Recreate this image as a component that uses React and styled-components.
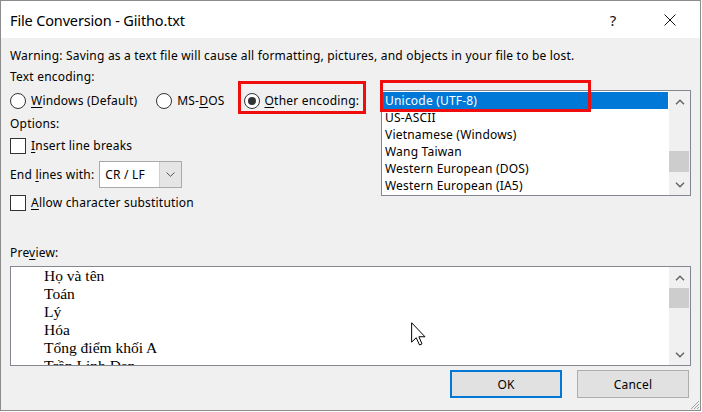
import React from "react";
import styled, { createGlobalStyle, css } from "styled-components";

const UI = `"Noto Sans", "Open Sans", "DejaVu Sans", sans-serif`;
const SERIF = `"Liberation Serif", "DejaVu Serif", serif`;

const GlobalStyle = createGlobalStyle`
  html, body { margin: 0; padding: 0; background: #ffffff; }
  body { font-family: ${UI}; }
  *, *::before, *::after { box-sizing: border-box; }
`;

const Page = styled.div`
  position: relative;
  width: 702px;
  height: 412px;
  overflow: hidden;
  background: #ffffff;
`;

const Window = styled.div`
  width: 701px;
  height: 411px;
  border: 1px solid #8c8c8c;
  display: flex;
  flex-direction: column;
  font-family: ${UI};
  color: #000;
`;

const TitleBar = styled.div`
  height: 37px;
  flex: none;
  display: flex;
  align-items: center;
  background: #ffffff;
  padding-left: 9px;
`;

const Title = styled.div`
  font-size: 14.5px;
  letter-spacing: -0.15px;
  white-space: nowrap;
`;

const TitleButtons = styled.div`
  margin-left: auto;
  display: flex;
  height: 100%;
`;

const TitleButton = styled.div`
  width: ${(p) => p.$w}px;
  height: 100%;
  display: flex;
  align-items: center;
  justify-content: center;
  font-size: 15px;
  color: #111;
`;

const Body = styled.div`
  position: relative;
  flex: 1;
  background: #f0f0f0;
  padding: 8px 9px 0;
  display: flex;
  flex-direction: column;
  font-size: 12px;
  letter-spacing: 0.2px;
`;

const Line = styled.div`
  height: ${(p) => p.$h}px;
  line-height: ${(p) => p.$h}px;
  margin-top: ${(p) => p.$mt || 0}px;
  white-space: nowrap;
`;

const Key = styled.span`
  text-decoration: underline;
  text-underline-offset: 2px;
`;

const EncodingSection = styled.div`
  display: flex;
  align-items: flex-start;
  height: 126px;
`;

const LeftColumn = styled.div`
  width: 371px;
  display: flex;
  flex-direction: column;
`;

const Row = styled.div`
  display: flex;
  align-items: center;
  height: ${(p) => p.$h}px;
  gap: ${(p) => p.$gap || 0}px;
  white-space: nowrap;
`;

const Option = styled.label`
  display: flex;
  align-items: center;
  gap: 5px;
`;

const RadioCircle = styled.span`
  width: 16px;
  height: 16px;
  flex: none;
  border: 1px solid #333;
  border-radius: 50%;
  background: #fff;
  display: flex;
  align-items: center;
  justify-content: center;
  ${(p) =>
    p.$checked &&
    css`
      &::after {
        content: "";
        width: 8px;
        height: 8px;
        border-radius: 50%;
        background: #333;
      }
    `}
`;

const CheckBox = styled.span`
  width: 16px;
  height: 16px;
  flex: none;
  border: 1px solid #333;
  background: #fff;
`;

const Combo = styled.div`
  margin-left: 5px;
  width: 83px;
  height: 27px;
  border: 1px solid #a9a9a9;
  background: #fff;
  display: flex;
`;

const ComboValue = styled.div`
  flex: 1;
  padding-left: 5px;
  display: flex;
  align-items: center;
`;

const ComboButton = styled.div`
  width: 22px;
  background: #e5e5e5;
  border-left: 1px solid #cfcfcf;
  display: flex;
  align-items: center;
  justify-content: center;
`;

const ListBox = styled.div`
  margin-top: 2px;
  width: 310px;
  height: 106px;
  border: 1px solid #828790;
  background: #fff;
  display: flex;
`;

const Items = styled.div`
  flex: 1;
  padding: 1px 1px 0 1px;
  overflow: hidden;
`;

const Item = styled.div`
  height: 17px;
  line-height: 17px;
  padding-left: 2px;
  white-space: nowrap;
  ${(p) =>
    p.$selected &&
    css`
      background: #0078d7;
      color: #fff;
    `}
`;

const ScrollBar = styled.div`
  width: 21px;
  flex: none;
  background: #f0f0f0;
  display: flex;
  flex-direction: column;
`;

const ScrollArrow = styled.div`
  height: 21px;
  flex: none;
  display: flex;
  align-items: center;
  justify-content: center;
`;

const ScrollTrack = styled.div`
  flex: 1;
  display: flex;
  flex-direction: column;
  justify-content: ${(p) => (p.$atEnd ? "flex-end" : "flex-start")};
  padding: ${(p) => (p.$atEnd ? "0 1px 2px 0" : "0 1px 0 0")};
`;

const Thumb = styled.div`
  height: ${(p) => p.$h}px;
  background: #cdcdcd;
`;

const PreviewBox = styled.div`
  margin-top: 3px;
  height: 100px;
  border: 1px solid #828790;
  background: #fff;
  display: flex;
`;

const PreviewText = styled.div`
  flex: 1;
  overflow: hidden;
  padding-left: 33px;
  font-family: ${SERIF};
  font-size: 15.5px;
  letter-spacing: 0;
  line-height: 17.9px;
  white-space: nowrap;
`;

const ButtonRow = styled.div`
  margin-top: 4px;
  display: flex;
  justify-content: flex-end;
  gap: 15px;
  padding-right: 2px;
`;

const Button = styled.div`
  width: 112px;
  height: 28px;
  background: #e1e1e1;
  border: ${(p) => (p.$primary ? "2px solid #0078d7" : "1px solid #adadad")};
  display: flex;
  align-items: center;
  justify-content: center;
`;

const Grip = styled.svg`
  position: absolute;
  right: 0;
  bottom: 0;
`;

const Highlight = styled.div`
  position: absolute;
  left: ${(p) => p.$x}px;
  top: ${(p) => p.$y}px;
  width: ${(p) => p.$w}px;
  height: ${(p) => p.$h}px;
  border: 3px solid #f00d0d;
  pointer-events: none;
`;

const Cursor = styled.svg`
  position: absolute;
  left: 411px;
  top: 322px;
`;

const Chevron = ({ dir }) => (
  <svg width="10" height="6" viewBox="0 0 10 6">
    <polyline
      points={dir === "up" ? "1,5.2 5,1.2 9,5.2" : "1,0.8 5,4.8 9,0.8"}
      fill="none"
      stroke="#606060"
      strokeWidth="1.4"
    />
  </svg>
);

const SmallChevron = () => (
  <svg width="9" height="5" viewBox="0 0 9 5">
    <polyline points="0.5,0.5 4.5,4.3 8.5,0.5" fill="none" stroke="#555" strokeWidth="1" />
  </svg>
);

const encodings = [
  "Unicode (UTF-8)",
  "US-ASCII",
  "Vietnamese (Windows)",
  "Wang Taiwan",
  "Western European (DOS)",
  "Western European (IA5)",
];

const previewLines = ["Họ và tên", "Toán", "Lý", "Hóa", "Tổng điểm khối A", "Trần Linh Đan"];

export default function App() {
  return (
    <Page>
      <GlobalStyle />
      <Window>
        <TitleBar>
          <Title>File Conversion - Giitho.txt</Title>
          <TitleButtons>
            <TitleButton $w={54}>?</TitleButton>
            <TitleButton $w={60}>
              <svg width="12" height="12" viewBox="0 0 12 12">
                <path d="M0.5 0.5 L11.5 11.5 M11.5 0.5 L0.5 11.5" stroke="#111" strokeWidth="1" />
              </svg>
            </TitleButton>
          </TitleButtons>
        </TitleBar>
        <Body>
          <Line $h={20}>
            Warning: Saving as a text file will cause all formatting, pictures, and objects in your file to be lost.
          </Line>
          <Line $h={22}>Text encoding:</Line>
          <EncodingSection>
            <LeftColumn>
              <Row $h={25} $gap={19}>
                <Option>
                  <RadioCircle />
                  <span>
                    <Key>W</Key>indows (Default)
                  </span>
                </Option>
                <Option>
                  <RadioCircle />
                  <span>
                    MS-<Key>D</Key>OS
                  </span>
                </Option>
                <Option>
                  <RadioCircle $checked />
                  <span>
                    <Key>O</Key>ther encoding:
                  </span>
                </Option>
              </Row>
              <Row $h={21}>Options:</Row>
              <Row $h={23}>
                <Option>
                  <CheckBox />
                  <span>
                    <Key>I</Key>nsert line breaks
                  </span>
                </Option>
              </Row>
              <Row $h={34}>
                <span>
                  End <Key>l</Key>ines with:
                </span>
                <Combo>
                  <ComboValue>CR / LF</ComboValue>
                  <ComboButton>
                    <SmallChevron />
                  </ComboButton>
                </Combo>
              </Row>
              <Row $h={23}>
                <Option>
                  <CheckBox />
                  <span>
                    <Key>A</Key>llow character substitution
                  </span>
                </Option>
              </Row>
            </LeftColumn>
            <ListBox>
              <Items>
                {encodings.map((e, i) => (
                  <Item key={e} $selected={i === 0}>
                    {e}
                  </Item>
                ))}
              </Items>
              <ScrollBar>
                <ScrollArrow>
                  <Chevron dir="up" />
                </ScrollArrow>
                <ScrollTrack $atEnd>
                  <Thumb $h={21} />
                </ScrollTrack>
                <ScrollArrow>
                  <Chevron dir="down" />
                </ScrollArrow>
              </ScrollBar>
            </ListBox>
          </EncodingSection>
          <Line $h={20} $mt={29}>
            Pre<Key>v</Key>iew:
          </Line>
          <PreviewBox>
            <PreviewText>
              {previewLines.map((l) => (
                <div key={l}>{l}</div>
              ))}
            </PreviewText>
            <ScrollBar>
              <ScrollArrow>
                <Chevron dir="up" />
              </ScrollArrow>
              <ScrollTrack>
                <Thumb $h={20} />
              </ScrollTrack>
              <ScrollArrow>
                <Chevron dir="down" />
              </ScrollArrow>
            </ScrollBar>
          </PreviewBox>
          <ButtonRow>
            <Button $primary>OK</Button>
            <Button>Cancel</Button>
          </ButtonRow>
          <Grip width="11" height="11" viewBox="0 0 11 11">
            <path d="M10 2 L2 10 M10 5 L5 10 M10 8 L8 10" stroke="#a0a0a0" strokeWidth="1" />
          </Grip>
        </Body>
      </Window>
      <Highlight $x={238} $y={81} $w={128} $h={33} />
      <Highlight $x={380} $y={80} $w={211} $h={32} />
      <Cursor width="15" height="24" viewBox="0 0 12 19">
        <path
          d="M0.5 0.5 L0.5 16 L4.2 12.5 L6.8 18.3 L8.8 17.4 L6.3 11.7 L11.2 11.7 Z"
          fill="#fff"
          stroke="#000"
          strokeWidth="0.8"
          strokeLinejoin="round"
        />
      </Cursor>
    </Page>
  );
}
